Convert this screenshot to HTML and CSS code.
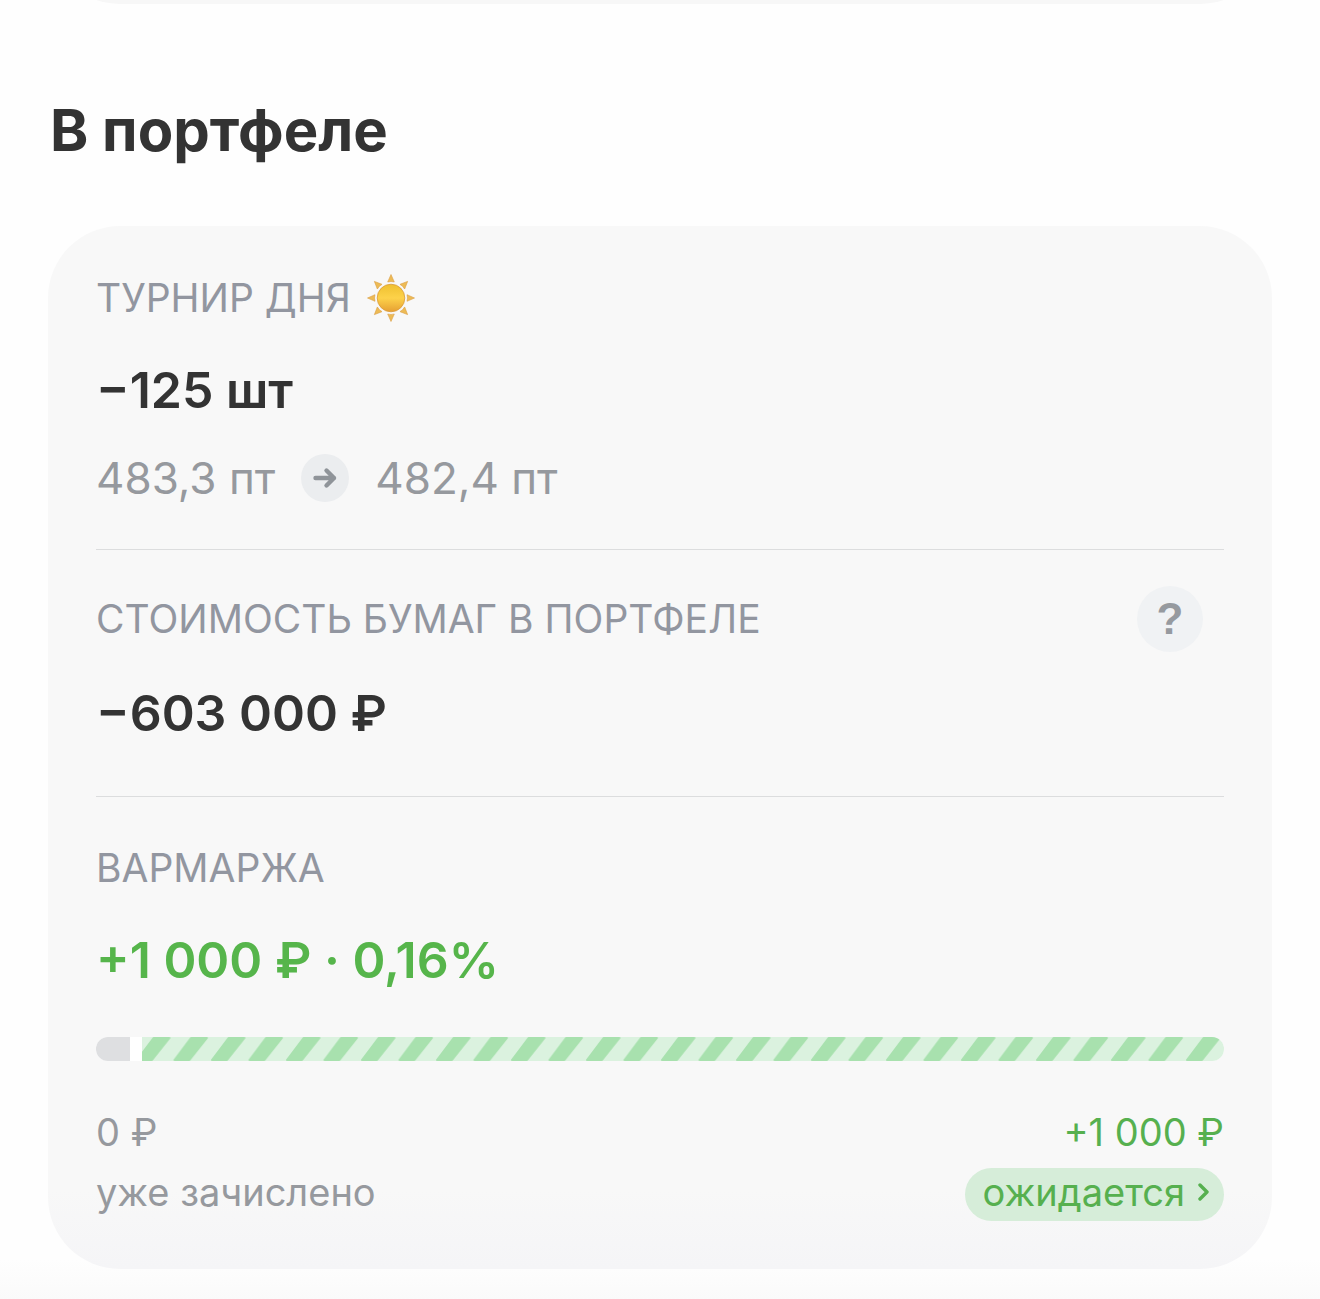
FILE: index.html
```
<!DOCTYPE html>
<html lang="ru">
<head>
  <meta charset="UTF-8" />
  <meta name="viewport" content="width=device-width, initial-scale=1.0"/>
  <title>В портфеле</title>
  <link rel="stylesheet" href="styles.css">
</head>
<body>
  <!-- Bottom edge of the previous card -->
  <div class="prev">
    <div class="prev-card"></div>
  </div>

  <main class="container">
    <h1>В портфеле</h1>

    <div class="card">
      <!-- Position -->
      <section class="position">
        <h2>
          ТУРНИР ДНЯ
          <svg class="sun" viewBox="0 0 48 48" aria-hidden="true">
            <defs>
              <linearGradient id="disc" x1="0" y1="0" x2="0" y2="1">
                <stop offset="0" stop-color="#efc02f"/>
                <stop offset="0.5" stop-color="#fdd24a"/>
                <stop offset="1" stop-color="#e6a033"/>
              </linearGradient>
              <path id="ray" d="M24 0.5 L27.300 8 Q24 7 20.700 8 Z"/>
            </defs>
            <g fill="#edbb55" stroke="#dca044" stroke-width="0.6">
              <use href="#ray"/>
              <use href="#ray" transform="rotate(45 24 24)"/>
              <use href="#ray" transform="rotate(90 24 24)"/>
              <use href="#ray" transform="rotate(135 24 24)"/>
              <use href="#ray" transform="rotate(180 24 24)"/>
              <use href="#ray" transform="rotate(225 24 24)"/>
              <use href="#ray" transform="rotate(270 24 24)"/>
              <use href="#ray" transform="rotate(315 24 24)"/>
            </g>
            <circle cx="24" cy="24" r="13.8" fill="url(#disc)" stroke="#d99a3a" stroke-width="0.8"/>
          </svg>
        </h2>
        <p class="value">−125 шт</p>
        <p class="range">
          <span>483,3 пт</span>
          <svg class="arrow" viewBox="0 0 48 48" aria-hidden="true">
            <circle cx="24" cy="24" r="24" fill="#ebedef"/>
            <path d="M14.500 24H33M25.500 16.500L33 24L25.500 31.500" fill="none" stroke="#8f9499" stroke-width="4.4" stroke-linecap="round" stroke-linejoin="round"/>
          </svg>
          <span>482,4 пт</span>
        </p>
      </section>

      <!-- Value of securities -->
      <section class="worth">
        <div class="worth-head">
          <h2>СТОИМОСТЬ БУМАГ В ПОРТФЕЛЕ</h2>
          <button class="help" type="button">?</button>
        </div>
        <p class="value">−603 000 ₽</p>
      </section>

      <!-- Variation margin -->
      <section class="margin">
        <h2>ВАРМАРЖА</h2>
        <p class="value green">+1 000 ₽ · 0,16%</p>

        <div class="bar">
          <div class="bar-done"></div>
          <svg class="bar-wait" aria-hidden="true">
            <defs>
              <pattern id="stripes" width="37.5" height="24" patternUnits="userSpaceOnUse">
                <path d="M-5 23L11.500 1H27.500L10 23ZM32.500 23L49 1H65L47.500 23Z" fill="#a8e1ae" stroke="#a8e1ae" stroke-width="2" stroke-linejoin="round"/>
              </pattern>
            </defs>
            <rect width="100%" height="24" fill="#dbf2df"/>
            <rect width="100%" height="24" fill="url(#stripes)"/>
          </svg>
        </div>

        <div class="totals">
          <div class="total">
            <span>0 ₽</span>
            <span>уже зачислено</span>
          </div>
          <div class="total total-right">
            <span>+1 000 ₽</span>
            <button class="pill" type="button">
              ожидается
              <svg class="chevron" viewBox="0 0 12 20" aria-hidden="true">
                <path d="M2 3L9 10L2 17" fill="none" stroke="currentColor" stroke-width="3.4" stroke-linecap="round" stroke-linejoin="round"/>
              </svg>
            </button>
          </div>
        </div>
      </section>
    </div>
  </main>
</body>
</html>
```

FILE: styles.css
```
* {
  box-sizing: border-box;
}

body {
  font-family: Inter, 'Liberation Sans', sans-serif;
  margin: 0;
  background-color: #fefefe;
  color: #333333;
}

h1, h2, p {
  margin: 0;
}

button {
  font-family: inherit;
  border: none;
  cursor: pointer;
}

.prev {
  display: flex;
  align-items: flex-end;
  height: 4px;
  padding: 0 48px;
  overflow: hidden;
}

.prev-card {
  flex: 1;
  height: 144px;
  flex-shrink: 0;
  background-color: #f7f7f7;
  border-radius: 72px;
}

.container {
  padding: 90px 48px 30px;
  background: linear-gradient(to top, #fafafa, #fefefe 40px);
}

h1 {
  font-size: 58px;
  line-height: 72px;
  font-weight: 700;
  margin-bottom: 60px;
  padding-left: 2px;
}

.card {
  padding: 0 48px;
  background: linear-gradient(to top, #f5f5f7, #f8f8f8 80px);
  border-radius: 72px;
}

.position {
  padding: 48px 0 43px;
}

.worth {
  padding: 36px 0 53px;
  border-top: 1px solid #dcddde;
  border-bottom: 1px solid #dcddde;
}

.margin {
  padding: 47px 0 47px;
}

h2 {
  display: flex;
  align-items: center;
  gap: 16px;
  font-size: 39px;
  line-height: 48px;
  font-weight: 400;
  color: #9296a0;
}

.sun, .arrow {
  width: 48px;
  height: 48px;
}

.value {
  margin-top: 38px;
  font-size: 50px;
  line-height: 60px;
  font-weight: 600;
}

.green {
  color: #56b54b;
}

.range {
  display: flex;
  align-items: center;
  gap: 26px;
  margin-top: 30px;
  font-size: 44px;
  line-height: 56px;
  color: #96999e;
}

.worth-head {
  display: flex;
  justify-content: space-between;
  align-items: center;
  padding-right: 21px;
}

.worth .value {
  margin-top: 31px;
}

.help {
  width: 66px;
  height: 66px;
  padding: 0;
  border-radius: 50%;
  background-color: #f0f2f4;
  color: #969a9f;
  font-family: 'Liberation Sans', sans-serif;
  font-size: 44px;
  font-weight: 700;
}

.bar {
  display: flex;
  gap: 12px;
  height: 24px;
  margin-top: 47px;
  background-color: white;
  border-radius: 12px;
  overflow: hidden;
}

.bar-done {
  flex: 0 0 3%;
  background-color: #dedfe1;
}

.bar-wait {
  flex: 1;
  height: 24px;
}

.totals {
  display: flex;
  justify-content: space-between;
  margin-top: 41px;
  font-size: 38px;
  line-height: 60px;
  color: #96999e;
}

.total {
  display: flex;
  flex-direction: column;
}

.total-right {
  align-items: flex-end;
  color: #56b04f;
}

.pill {
  display: flex;
  align-items: center;
  gap: 13px;
  height: 53px;
  margin-top: 6px;
  padding: 0 14px 6px 18px;
  border-radius: 27px;
  background-color: #d6edd9;
  color: inherit;
  font-size: 38px;
}

.chevron {
  width: 12px;
  height: 20px;
}

@media (max-width: 768px) {
  .container {
    padding-left: 16px;
    padding-right: 16px;
  }

  .card {
    padding: 0 24px;
  }
}
```
